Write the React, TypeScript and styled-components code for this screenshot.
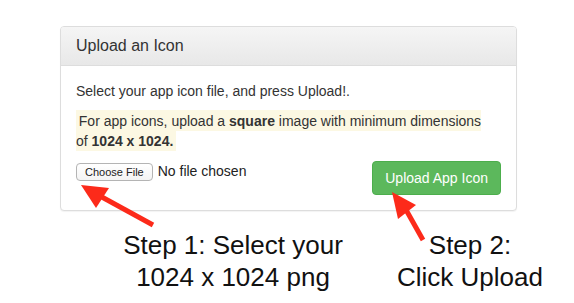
import React from 'react';
import styled, { createGlobalStyle } from 'styled-components';

const GlobalStyle = createGlobalStyle`
  html, body {
    margin: 0;
    padding: 0;
    background: #fff;
  }
  body {
    font-family: "Liberation Sans", Arial, sans-serif;
    color: #333;
    font-size: 14px;
    line-height: 20px;
  }
`;

const Page = styled.div`
  position: relative;
  width: 574px;
  height: 303px;
  padding: 26px 0 0 60px;
  box-sizing: border-box;
`;

const Panel = styled.div`
  width: 457px;
  box-sizing: border-box;
  border: 1px solid #ddd;
  border-radius: 4px;
  background: #fff;
  box-shadow: 0 1px 1px rgba(0, 0, 0, 0.05);
`;

const PanelHeading = styled.div`
  padding: 10px 15px;
  border-bottom: 1px solid #ddd;
  border-radius: 3px 3px 0 0;
  background: linear-gradient(to bottom, #f5f5f5 0%, #e8e8e8 100%);
`;

const PanelTitle = styled.h3`
  margin: 0;
  font-size: 16px;
  font-weight: 500;
  line-height: 17.6px;
  color: #333;
`;

const PanelBody = styled.div`
  padding: 15px;
`;

const Paragraph = styled.p`
  margin: 0 0 10px;
`;

const Mark = styled.mark`
  padding: 0.2em;
  background: #fcf8e3;
  color: #333;
`;

const Actions = styled.div`
  display: flex;
  justify-content: space-between;
  align-items: flex-start;
`;

const FilePicker = styled.div`
  display: flex;
  align-items: flex-start;
  gap: 5px;
`;

const ChooseButton = styled.span`
  margin-top: 2px;
  height: 18px;
  box-sizing: border-box;
  padding: 0 8px;
  border: 1px solid #b4b4b4;
  border-radius: 4px;
  background: linear-gradient(to bottom, #fff, #f4f4f4);
  font-size: 11px;
  line-height: 16px;
  color: #222;
`;

const FileStatus = styled.span`
  color: #222;
`;

const SuccessButton = styled.button`
  padding: 6px 12px;
  border: 1px solid #4cae4c;
  border-radius: 4px;
  background: #5cb85c;
  color: #fff;
  font-family: inherit;
  font-size: 14px;
  line-height: 20px;
`;

const Captions = styled.div`
  display: grid;
  grid-template-columns: 240px 160px;
  column-gap: 37px;
  margin: 18px 0 0 53px;
`;

const Caption = styled.div`
  text-align: center;
  font-family: "Liberation Sans", Arial, sans-serif;
  font-size: 26px;
  line-height: 32px;
  color: #111;
`;

const Overlay = styled.svg`
  position: absolute;
  left: 0;
  top: 0;
  pointer-events: none;
`;

const ARROW = '#fc2a1a';

const App: React.FC = () => (
  <>
    <GlobalStyle />
    <Page>
      <Panel>
        <PanelHeading>
          <PanelTitle>Upload an Icon</PanelTitle>
        </PanelHeading>
        <PanelBody>
          <Paragraph>Select your app icon file, and press Upload!.</Paragraph>
          <Paragraph>
            <Mark>
              For app icons, upload a <b>square</b> image with minimum dimensions
              <br />
              of <b>1024 x 1024.</b>
            </Mark>
          </Paragraph>
          <Actions>
            <FilePicker>
              <ChooseButton>Choose File</ChooseButton>
              <FileStatus>No file chosen</FileStatus>
            </FilePicker>
            <SuccessButton>Upload App Icon</SuccessButton>
          </Actions>
        </PanelBody>
      </Panel>
      <Captions>
        <Caption>
          Step 1: Select your
          <br />
          1024 x 1024 png
        </Caption>
        <Caption>
          Step 2:
          <br />
          Click Upload
        </Caption>
      </Captions>
      <Overlay width="574" height="303" viewBox="0 0 574 303">
        <line x1="153" y1="225" x2="100" y2="196" stroke={ARROW} strokeWidth="5" />
        <polygon points="81,185 109,188 96,208" fill={ARROW} />
        <line x1="423" y1="240" x2="405" y2="208" stroke={ARROW} strokeWidth="5" />
        <polygon points="392,192 416,205 398,219" fill={ARROW} />
      </Overlay>
    </Page>
  </>
);

export default App;
